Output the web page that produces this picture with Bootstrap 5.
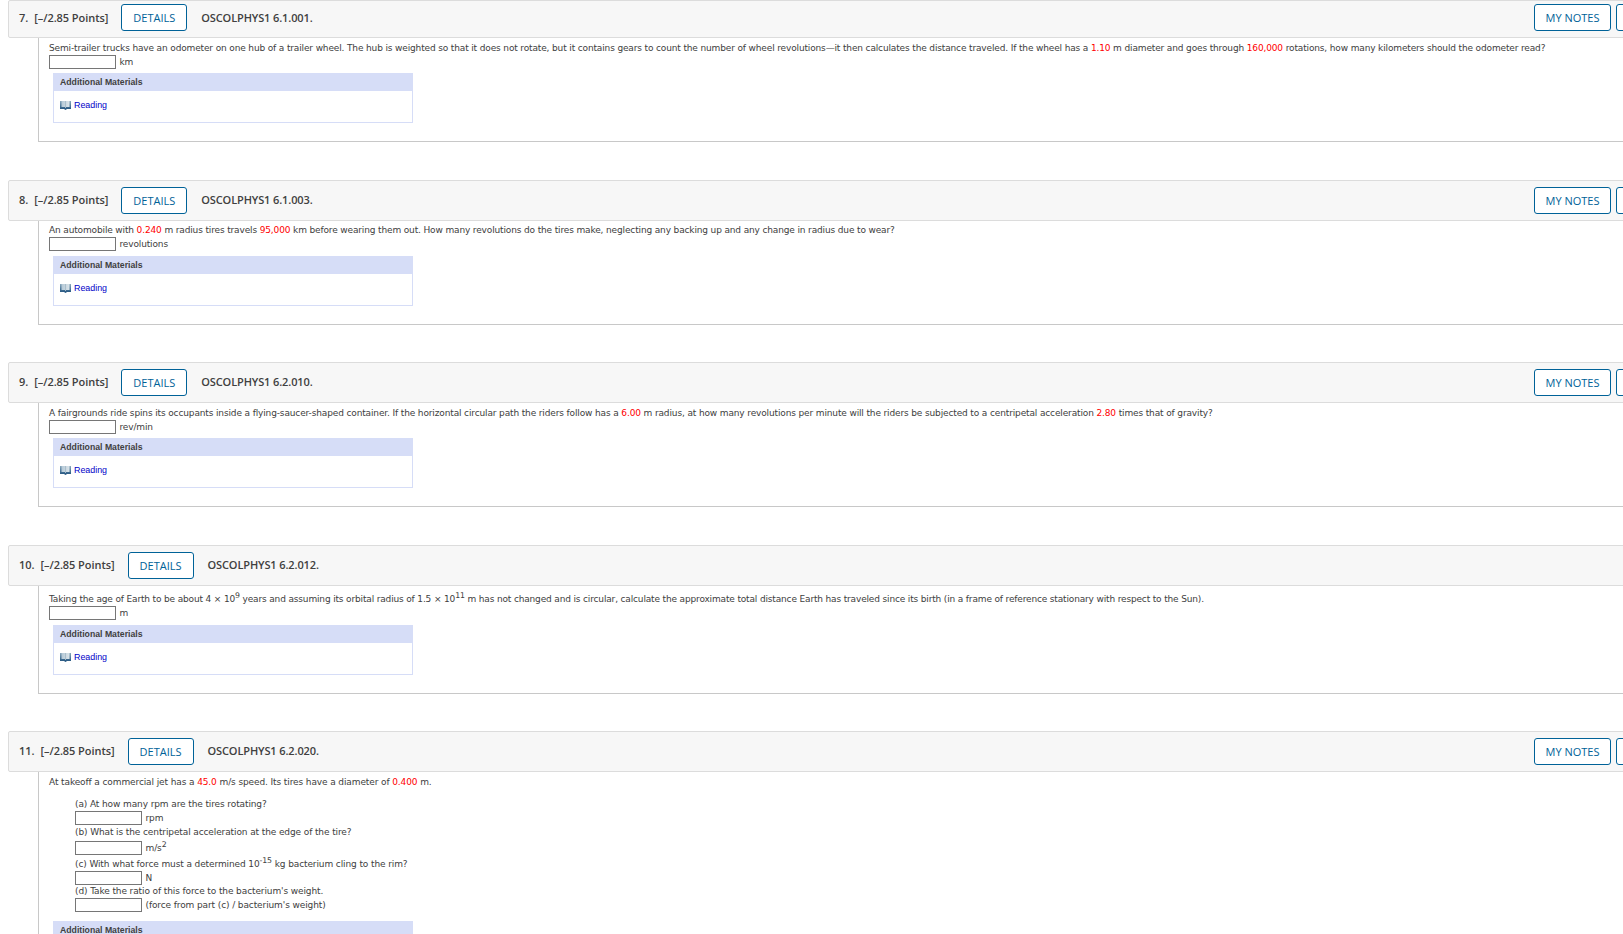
<!DOCTYPE html>
<html lang="en">

<head>
    <meta charset="UTF-8">
    <meta name="viewport" content="width=device-width, initial-scale=1.0">
    <title>Homework</title>
    <link href="https://cdn.jsdelivr.net/npm/bootstrap@5.3.0/dist/css/bootstrap.min.css" rel="stylesheet">
    <style>
        body {
            font-family: Verdana, 'DejaVu Sans', sans-serif;
            font-size: 9px;
            line-height: 14px;
            letter-spacing: -0.143px;
            color: #404040;
            background-color: #fff;
        }

        .assignment {
            padding-left: 8px;
        }

        .question {
            width: 1705px;
            margin-bottom: 38px;
        }

        .question-odd {
            margin-bottom: 37px;
        }

        .question-header {
            height: 41px;
            padding: 0 11px 1px 10px;
            border: 1px solid #dcdcdc;
            border-radius: 2px 0 0 2px;
            background-color: #f7f7f7;
            font: 600 11px/16px 'Open Sans', sans-serif;
            letter-spacing: -0.06px;
        }

        .question-first .question-header {
            height: 38px;
            padding-bottom: 3px;
        }

        .question-number {
            margin-right: 6px;
        }

        .question-code {
            letter-spacing: -0.12px;
        }

        .btn-question {
            --bs-btn-padding-x: 0;
            --bs-btn-padding-y: 0;
            --bs-btn-color: #006298;
            --bs-btn-border-color: #006298;
            --bs-btn-bg: #fff;
            --bs-btn-border-radius: 3px;
            width: 66px;
            height: 27px;
            margin: 0 14px 0 13px;
            font: 400 11px/25px 'Open Sans', sans-serif;
            letter-spacing: 0;
        }

        .btn-notes {
            width: 77px;
            margin: 0 5px 0 0;
        }

        .header-actions {
            margin-left: auto;
            margin-right: 3px;
        }

        .question-body {
            margin-left: 30px;
            padding: 3px 0 18px 10px;
            border: 1px solid #c8c8c8;
            border-top: 0;
        }

        .question-text {
            height: 14px;
            white-space: nowrap;
        }

        .question-text-short {
            height: 13px;
            line-height: 13px;
        }

        .question-body-tall {
            padding-top: 6px;
        }

        .text-9 {
            letter-spacing: -0.136px;
        }

        .text-10 {
            letter-spacing: -0.156px;
        }

        .text-11 {
            letter-spacing: -0.11px;
        }

        .question-body sup {
            font-size: 7.8px;
            top: -4px;
            line-height: 0;
            vertical-align: baseline;
        }

        .rand {
            color: #f00;
        }

        .answer-row {
            height: 14px;
            gap: 3.500px;
        }

        .answer-box {
            width: 67px;
            height: 14px;
            padding: 0;
            border: 1px solid #767676;
            background: #fff;
        }

        .parts {
            padding: 8px 0 5px 26px;
        }

        .answer-gap {
            margin-top: 2px;
        }

        .materials {
            width: 360px;
            height: 50px;
            margin: 4px 0 0 4px;
            border: 1px solid #d6ddf7;
            letter-spacing: 0;
        }

        .materials-lower {
            margin-top: 5px;
        }

        .materials-title {
            height: 17px;
            padding-left: 6px;
            background-color: #d6ddf7;
            font: bold 8.7px/16px 'Liberation Sans', Arial, sans-serif;
        }

        .materials-link {
            margin: 7px 0 0 6px;
            gap: 3px;
            color: #0000c8;
            font: 8.9px/14px 'Liberation Sans', Arial, sans-serif;
        }
    </style>
</head>

<body>
    <div class="assignment vh-100 overflow-hidden">
        <!-- Question 7 -->
        <div class="question question-first">
            <div class="question-header d-flex align-items-center">
                <span class="question-number">7.</span>
                <span>[–/2.85 Points]</span>
                <button type="button" class="btn btn-question">DETAILS</button>
                <span class="question-code">OSCOLPHYS1 6.1.001.</span>
                <div class="header-actions d-flex">
                    <button type="button" class="btn btn-question btn-notes">MY NOTES</button>
                    <button type="button" class="btn btn-question btn-notes" aria-label="Ask your teacher"></button>
                </div>
            </div>
            <div class="question-body">
                <div class="question-text">Semi-trailer trucks have an odometer on one hub of a trailer wheel. The hub is weighted so that it does not rotate, but it contains gears to count the number of wheel revolutions—it then calculates the distance traveled. If the wheel has a <span class="rand">1.10</span> m diameter and goes through <span class="rand">160,000</span> rotations, how many kilometers should the odometer read?</div>
                <div class="answer-row d-flex"><input type="text" class="answer-box"><span>km</span></div>
                <div class="materials">
                    <div class="materials-title">Additional Materials</div>
                    <div class="materials-link d-flex align-items-center"><svg width="11" height="9"><use href="#book" /></svg>Reading</div>
                </div>
            </div>
        </div>

        <!-- Question 8 -->
        <div class="question question-odd">
            <div class="question-header d-flex align-items-center">
                <span class="question-number">8.</span>
                <span>[–/2.85 Points]</span>
                <button type="button" class="btn btn-question">DETAILS</button>
                <span class="question-code">OSCOLPHYS1 6.1.003.</span>
                <div class="header-actions d-flex">
                    <button type="button" class="btn btn-question btn-notes">MY NOTES</button>
                    <button type="button" class="btn btn-question btn-notes" aria-label="Ask your teacher"></button>
                </div>
            </div>
            <div class="question-body">
                <div class="question-text question-text-short">An automobile with <span class="rand">0.240</span> m radius tires travels <span class="rand">95,000</span> km before wearing them out. How many revolutions do the tires make, neglecting any backing up and any change in radius due to wear?</div>
                <div class="answer-row d-flex"><input type="text" class="answer-box"><span>revolutions</span></div>
                <div class="materials materials-lower">
                    <div class="materials-title">Additional Materials</div>
                    <div class="materials-link d-flex align-items-center"><svg width="11" height="9"><use href="#book" /></svg>Reading</div>
                </div>
            </div>
        </div>

        <!-- Question 9 -->
        <div class="question">
            <div class="question-header d-flex align-items-center">
                <span class="question-number">9.</span>
                <span>[–/2.85 Points]</span>
                <button type="button" class="btn btn-question">DETAILS</button>
                <span class="question-code">OSCOLPHYS1 6.2.010.</span>
                <div class="header-actions d-flex">
                    <button type="button" class="btn btn-question btn-notes">MY NOTES</button>
                    <button type="button" class="btn btn-question btn-notes" aria-label="Ask your teacher"></button>
                </div>
            </div>
            <div class="question-body text-9">
                <div class="question-text">A fairgrounds ride spins its occupants inside a flying-saucer-shaped container. If the horizontal circular path the riders follow has a <span class="rand">6.00</span> m radius, at how many revolutions per minute will the riders be subjected to a centripetal acceleration <span class="rand">2.80</span> times that of gravity?</div>
                <div class="answer-row d-flex"><input type="text" class="answer-box"><span>rev/min</span></div>
                <div class="materials">
                    <div class="materials-title">Additional Materials</div>
                    <div class="materials-link d-flex align-items-center"><svg width="11" height="9"><use href="#book" /></svg>Reading</div>
                </div>
            </div>
        </div>

        <!-- Question 10 -->
        <div class="question question-odd">
            <div class="question-header d-flex align-items-center">
                <span class="question-number">10.</span>
                <span>[–/2.85 Points]</span>
                <button type="button" class="btn btn-question">DETAILS</button>
                <span class="question-code">OSCOLPHYS1 6.2.012.</span>
            </div>
            <div class="question-body question-body-tall text-10">
                <div class="question-text">Taking the age of Earth to be about 4 × 10<sup>9</sup> years and assuming its orbital radius of 1.5 × 10<sup>11</sup> m has not changed and is circular, calculate the approximate total distance Earth has traveled since its birth (in a frame of reference stationary with respect to the Sun).</div>
                <div class="answer-row d-flex"><input type="text" class="answer-box"><span>m</span></div>
                <div class="materials materials-lower">
                    <div class="materials-title">Additional Materials</div>
                    <div class="materials-link d-flex align-items-center"><svg width="11" height="9"><use href="#book" /></svg>Reading</div>
                </div>
            </div>
        </div>

        <!-- Question 11 -->
        <div class="question">
            <div class="question-header d-flex align-items-center">
                <span class="question-number">11.</span>
                <span>[–/2.85 Points]</span>
                <button type="button" class="btn btn-question">DETAILS</button>
                <span class="question-code">OSCOLPHYS1 6.2.020.</span>
                <div class="header-actions d-flex">
                    <button type="button" class="btn btn-question btn-notes">MY NOTES</button>
                    <button type="button" class="btn btn-question btn-notes" aria-label="Ask your teacher"></button>
                </div>
            </div>
            <div class="question-body text-11">
                <div class="question-text">At takeoff a commercial jet has a <span class="rand">45.0</span> m/s speed. Its tires have a diameter of <span class="rand">0.400</span> m.</div>
                <div class="parts">
                    <div class="question-text">(a) At how many rpm are the tires rotating?</div>
                    <div class="answer-row d-flex"><input type="text" class="answer-box"><span>rpm</span></div>
                    <div class="question-text">(b) What is the centripetal acceleration at the edge of the tire?</div>
                    <div class="answer-row answer-gap d-flex"><input type="text" class="answer-box"><span>m/s<sup>2</sup></span></div>
                    <div class="question-text answer-gap">(c) With what force must a determined 10<sup>-15</sup> kg bacterium cling to the rim?</div>
                    <div class="answer-row d-flex"><input type="text" class="answer-box"><span>N</span></div>
                    <div class="question-text question-text-short">(d) Take the ratio of this force to the bacterium's weight.</div>
                    <div class="answer-row d-flex"><input type="text" class="answer-box"><span>(force from part (c) / bacterium's weight)</span></div>
                </div>
                <div class="materials">
                    <div class="materials-title">Additional Materials</div>
                </div>
            </div>
        </div>
    </div>

    <!-- Book icon shared by all reading links -->
    <svg width="0" height="0" class="position-absolute top-0">
        <defs>
            <linearGradient id="cover" x1="0" y1="0" x2="0" y2="1">
                <stop offset="0" stop-color="#8ba9bd" />
                <stop offset="1" stop-color="#1c4f7c" />
            </linearGradient>
            <linearGradient id="page" x1="0" y1="0" x2="1" y2="0">
                <stop offset="0" stop-color="#b4c8d6" />
                <stop offset="1" stop-color="#dce5ea" />
            </linearGradient>
        </defs>
        <symbol id="book" viewBox="0 0 11 9">
            <path d="M0 0h11v8H7L5.500 9 4 8H0z" fill="url(#cover)" />
            <path d="M1.500 0H5v6H1.500zM6 0h3.500v6H6z" fill="url(#page)" />
            <path d="M5 0h1v7H5z" fill="#a9bdca" />
        </symbol>
    </svg>

    <script src="https://cdn.jsdelivr.net/npm/bootstrap@5.3.0/dist/js/bootstrap.bundle.min.js"></script>
</body>

</html>
